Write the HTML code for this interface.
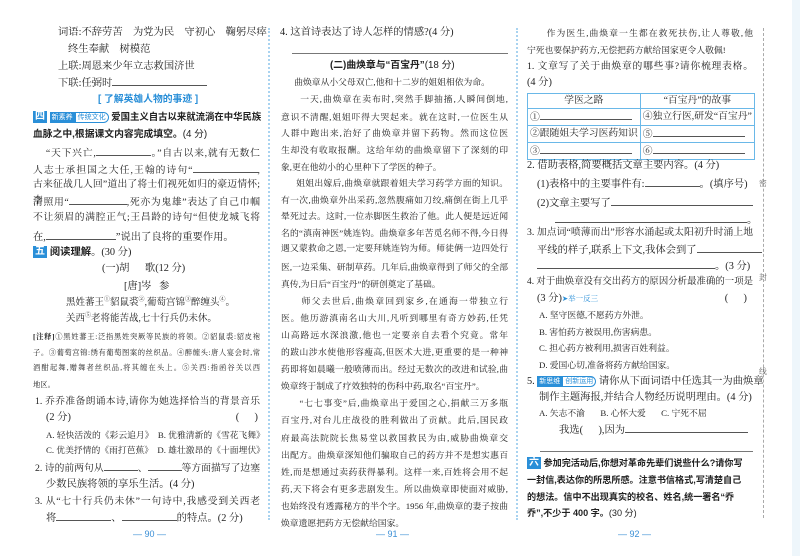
<!DOCTYPE html>
<html><head><meta charset="utf-8"><style>
body{margin:0;width:800px;height:556px;background:#fff;position:relative;overflow:hidden;font-family:"Liberation Serif","Noto Serif CJK SC","Noto Sans CJK SC",serif;color:#222;}
.l{position:absolute;white-space:nowrap;font-size:10.3px;line-height:16px;}
.j{text-align:justify;text-align-last:justify;white-space:normal;font-size:9.8px}
.s{font-size:8.8px}
.xs{font-size:7.8px}
.b{font-weight:bold;font-family:"Liberation Sans","Noto Sans CJK SC",sans-serif;}
.u{display:inline-block;border-bottom:1px solid #555;height:10px;vertical-align:baseline}
.tag{display:inline-block;background:#2a8fd8;color:#fff;font-size:7px;line-height:11px;padding:0 2px;font-family:"Liberation Sans","Noto Sans CJK SC",sans-serif;vertical-align:1px;font-weight:normal}
.tag2{display:inline-block;border:1px solid #2a8fd8;color:#2a8fd8;font-size:7px;line-height:9px;padding:0 2px;border-radius:0 6px 6px 0;font-family:"Liberation Sans","Noto Sans CJK SC",sans-serif;vertical-align:1px;font-weight:normal}
.num{display:inline-block;background:#2a8fd8;color:#fff;font-size:10px;line-height:12px;padding:0 2px;vertical-align:1px;font-family:"Liberation Sans","Noto Sans CJK SC",sans-serif;font-weight:bold}
.pn{position:absolute;color:#3b8fd6;font-size:9px;font-family:"Liberation Sans",sans-serif;top:529px}
.nt{position:absolute;left:33px;width:227px;font-size:7.3px;line-height:14px;text-align:justify;text-align-last:justify;white-space:nowrap}
table{position:absolute;border-collapse:collapse;font-size:9.8px;}
td{border:1.5px solid #6ab8e8;height:14px;padding:0 2px;line-height:14px;white-space:nowrap}
</style></head><body>
<div style="position:absolute;left:268px;top:28px;width:0;height:492px;border-left:2px dotted #a9d3f0"></div>
<div style="position:absolute;left:516px;top:28px;width:0;height:492px;border-left:2px dotted #a9d3f0"></div>
<div style="position:absolute;left:763px;top:28px;width:0;height:490px;border-left:1px dashed #aaa"></div>
<div class="l xs" style="left:759px;top:176px;color:#666">密</div>
<div class="l xs" style="left:759px;top:270px;color:#666">封</div>
<div class="l xs" style="left:759px;top:364px;color:#666">线</div>
<div style="position:absolute;left:792px;top:0;width:8px;height:556px;background:#eef6fb"></div>

<!-- LEFT -->
<div class="l" style="left:58px;top:25px">词语:不辞劳苦&nbsp;&nbsp;&nbsp;&nbsp;为党为民&nbsp;&nbsp;&nbsp;&nbsp;守初心&nbsp;&nbsp;&nbsp;&nbsp;鞠躬尽瘁</div>
<div class="l" style="left:68px;top:42px">终生奉献&nbsp;&nbsp;&nbsp;&nbsp;树模范</div>
<div class="l" style="left:58px;top:59px">上联:周恩来少年立志救国济世</div>
<div class="l" style="left:58px;top:75px">下联:任弼时<span class="u" style="width:95px"></span></div>
<div class="l b" style="left:98px;top:92px;color:#2a8fd8;font-size:9.8px">[ 了解英雄人物的事迹 ]</div>
<div class="l b" style="left:33px;top:109px;font-size:9.4px"><span class="num">四</span> <span class="tag">新素养</span><span class="tag2">传统文化</span> 爱国主义自古以来就流淌在中华民族</div>
<div class="l b" style="left:33px;top:127px;font-size:9.8px">血脉之中,根据课文内容完成填空。<span style="font-weight:normal">(4 分)</span></div>
<div class="l j" style="left:33px;top:145px;width:227px">&nbsp;&nbsp;&nbsp;&nbsp;“天下兴亡,<span class="u" style="width:55px"></span>。”自古以来,就有无数仁</div>
<div class="l j" style="left:33px;top:162px;width:227px">人志士承担国之大任,王翰的诗句“<span class="u" style="width:65px"></span>,</div>
<div class="l j" style="left:33px;top:177px;width:227px">古来征战几人回”道出了将士们视死如归的豪迈情怀;李</div>
<div class="l j" style="left:33px;top:194px;width:227px">清照用“<span class="u" style="width:58px"></span>,死亦为鬼雄”表达了自己巾帼</div>
<div class="l j" style="left:33px;top:210px;width:227px">不让须眉的满腔正气;王昌龄的诗句“但使龙城飞将</div>
<div class="l" style="left:33px;top:229px">在,<span class="u" style="width:70px"></span>”说出了良将的重要作用。</div>
<div class="l" style="left:33px;top:245px"><span class="num">五</span><span class="b"> 阅读理解</span>。(30 分)</div>
<div class="l" style="left:102px;top:261px">(一)胡&nbsp;&nbsp;&nbsp;&nbsp;&nbsp;&nbsp;歌(12 分)</div>
<div class="l" style="left:124px;top:279px">[唐]岑&nbsp;&nbsp;&nbsp;参</div>
<div class="l" style="left:66px;top:295px;font-size:9.5px">黑姓蕃王<sup style="font-size:6px;line-height:0">①</sup>貂鼠裘<sup style="font-size:6px;line-height:0">②</sup>,葡萄宫锦<sup style="font-size:6px;line-height:0">③</sup>醉缠头<sup style="font-size:6px;line-height:0">④</sup>。</div>
<div class="l" style="left:66px;top:311px;font-size:9.5px">关西<sup style="font-size:6px;line-height:0">⑤</sup>老将能苦战,七十行兵仍未休。</div>
<div class="nt" style="top:330px"><b>[注释]</b>①黑姓蕃王:泛指黑姓突厥等民族的将领。②貂鼠裘:貂皮袍</div>
<div class="nt" style="top:346px">子。③葡萄宫锦:绣有葡萄图案的丝织品。④醉缠头:唐人宴会时,常</div>
<div class="nt" style="top:361px">酒酣起舞,赠舞者丝织品,将其缠在头上。⑤关西:指函谷关以西</div>
<div class="l" style="left:33px;top:377px;font-size:7.3px">地区。</div>
<div class="l j" style="left:35px;top:394px;width:225px">1. 乔乔准备朗诵本诗,请你为她选择恰当的背景音乐</div>
<div class="l" style="left:46px;top:410px;width:214px">(2 分)<span style="position:absolute;right:2px">(&nbsp;&nbsp;&nbsp;&nbsp;&nbsp;&nbsp;)</span></div>
<div class="l s" style="left:46px;top:427px">A. 轻快活泼的《彩云追月》&nbsp;&nbsp;B. 优雅清新的《雪花飞舞》</div>
<div class="l s" style="left:46px;top:442px">C. 优美抒情的《雨打芭蕉》&nbsp;&nbsp;D. 雄壮激昂的《十面埋伏》</div>
<div class="l j" style="left:35px;top:460px;width:225px">2. 诗的前两句从<span class="u" style="width:34px"></span>、<span class="u" style="width:34px"></span>等方面描写了边塞</div>
<div class="l" style="left:46px;top:477px">少数民族将领的享乐生活。(4 分)</div>
<div class="l j" style="left:35px;top:494px;width:225px">3. 从“七十行兵仍未休”一句诗中,我感受到关西老</div>
<div class="l" style="left:46px;top:510px">将<span class="u" style="width:55px"></span>、<span class="u" style="width:55px"></span>的特点。(2 分)</div>
<div class="pn" style="left:133px">— 90 —</div>

<!-- MIDDLE -->
<div class="l" style="left:280px;top:25px">4. 这首诗表达了诗人怎样的情感?(4 分)</div>
<div style="position:absolute;left:292px;top:53px;width:216px;border-top:1px solid #777"></div>
<div class="l b" style="left:330px;top:58px;font-size:9.8px">(二)曲焕章与“百宝丹”<span style="font-weight:normal">(18 分)</span></div>
<div class="l s" style="left:281px;top:74px">&nbsp;&nbsp;&nbsp;&nbsp;&nbsp;&nbsp;曲焕章从小父母双亡,他和十二岁的姐姐相依为命。</div>
<div class="l s j" style="left:281px;top:91px;width:227px">&nbsp;&nbsp;&nbsp;&nbsp;&nbsp;&nbsp;一天,曲焕章在卖布时,突然手脚抽搐,人瞬间倒地,</div>
<div class="l s j" style="left:281px;top:109px;width:227px">意识不清醒,姐姐吓得大哭起来。就在这时,一位医生从</div>
<div class="l s j" style="left:281px;top:125px;width:227px">人群中跑出来,治好了曲焕章并留下药物。然而这位医</div>
<div class="l s j" style="left:281px;top:142px;width:227px">生却没有收取报酬。这给年幼的曲焕章留下了深刻的印</div>
<div class="l s" style="left:281px;top:159px">象,更在他幼小的心里种下了学医的种子。</div>
<div class="l s j" style="left:281px;top:175px;width:227px">&nbsp;&nbsp;&nbsp;&nbsp;&nbsp;&nbsp;姐姐出嫁后,曲焕章就跟着姐夫学习药学方面的知识。</div>
<div class="l s j" style="left:281px;top:192px;width:227px">有一次,曲焕章外出采药,忽然腹痛如刀绞,痛倒在街上几乎</div>
<div class="l s j" style="left:281px;top:208px;width:227px">晕死过去。这时,一位赤脚医生救治了他。此人便是远近闻</div>
<div class="l s j" style="left:281px;top:225px;width:227px">名的“滇南神医”姚连钧。曲焕章多年苦觅名师不得,今日得</div>
<div class="l s j" style="left:281px;top:240px;width:227px">遇又蒙救命之恩,一定要拜姚连钧为师。师徒俩一边四处行</div>
<div class="l s j" style="left:281px;top:259px;width:227px">医,一边采集、研制草药。几年后,曲焕章得到了师父的全部</div>
<div class="l s" style="left:281px;top:276px">真传,为日后“百宝丹”的研创奠定了基础。</div>
<div class="l s j" style="left:281px;top:293px;width:227px">&nbsp;&nbsp;&nbsp;&nbsp;&nbsp;&nbsp;师父去世后,曲焕章回到家乡,在通海一带独立行</div>
<div class="l s j" style="left:281px;top:310px;width:227px">医。他历游滇南名山大川,凡听到哪里有奇方妙药,任凭</div>
<div class="l s j" style="left:281px;top:327px;width:227px">山高路远水深浪激,他也一定要亲自去看个究竟。常年</div>
<div class="l s j" style="left:281px;top:344px;width:227px">的跋山涉水使他形容瘦高,但医术大进,更重要的是一种神</div>
<div class="l s j" style="left:281px;top:361px;width:227px">药即将如晨曦一般喷薄而出。经过无数次的改进和试验,曲</div>
<div class="l s" style="left:281px;top:378px">焕章终于制成了疗效独特的伤科中药,取名“百宝丹”。</div>
<div class="l s j" style="left:281px;top:395px;width:227px">&nbsp;&nbsp;&nbsp;&nbsp;&nbsp;&nbsp;“七七事变”后,曲焕章出于爱国之心,捐献三万多瓶</div>
<div class="l s j" style="left:281px;top:412px;width:227px">百宝丹,对台儿庄战役的胜利做出了贡献。此后,国民政</div>
<div class="l s j" style="left:281px;top:430px;width:227px">府最高法院院长焦易堂以救国救民为由,威胁曲焕章交</div>
<div class="l s j" style="left:281px;top:447px;width:227px">出配方。曲焕章深知他们骗取自己的药方并不是想实惠百</div>
<div class="l s j" style="left:281px;top:464px;width:227px">姓,而是想通过卖药获得暴利。这样一来,百姓将会用不起</div>
<div class="l s j" style="left:281px;top:481px;width:227px">药,天下将会有更多悲剧发生。所以曲焕章即使面对威胁,</div>
<div class="l s j" style="left:281px;top:498px;width:227px">也始终没有透露秘方的半个字。1956 年,曲焕章的妻子按曲</div>
<div class="l s" style="left:281px;top:515px">焕章遗愿把药方无偿献给国家。</div>
<div class="pn" style="left:376px">— 91 —</div>

<!-- RIGHT -->
<div class="l s j" style="left:527px;top:25px;width:226px">&nbsp;&nbsp;&nbsp;&nbsp;&nbsp;&nbsp;作为医生,曲焕章一生都在救死扶伤,让人尊敬,他</div>
<div class="l s" style="left:527px;top:42px">宁死也要保护药方,无偿把药方献给国家更令人敬佩!</div>
<div class="l j" style="left:527px;top:59px;width:226px">1. 文章写了关于曲焕章的哪些事?请你梳理表格。</div>
<div class="l" style="left:527px;top:75px">(4 分)</div>
<table style="left:527px;top:93px;width:226px">
<tr><td style="text-align:center;width:108px">学医之路</td><td style="text-align:center">“百宝丹”的故事</td></tr>
<tr><td>①<span class="u" style="width:92px"></span></td><td>④独立行医,研发“百宝丹”</td></tr>
<tr><td>②跟随姐夫学习医药知识</td><td>⑤<span class="u" style="width:92px"></span></td></tr>
<tr><td>③<span class="u" style="width:92px"></span></td><td>⑥<span class="u" style="width:92px"></span></td></tr>
</table>
<div class="l" style="left:527px;top:158px">2. 借助表格,简要概括文章主要内容。(4 分)</div>
<div class="l" style="left:537px;top:176px">(1)表格中的主要事件有:<span class="u" style="width:55px"></span>。(填序号)</div>
<div class="l" style="left:537px;top:195px">(2)文章主要写了<span class="u" style="width:142px"></span></div>
<div class="l" style="left:555px;top:212px"><span class="u" style="width:192px"></span>。</div>
<div class="l j" style="left:527px;top:225px;width:226px">3. 加点词“喷薄而出”形容水涌起或太阳初升时涌上地</div>
<div class="l" style="left:537px;top:242px">平线的样子,联系上下文,我体会到了<span class="u" style="width:65px"></span></div>
<div class="l" style="left:537px;top:258px"><span class="u" style="width:178px"></span>。(3 分)</div>
<div class="l j" style="left:527px;top:274px;width:226px;font-size:9.4px">4. 对于曲焕章没有交出药方的原因分析最准确的一项是</div>
<div class="l" style="left:537px;top:291px;width:216px">(3 分)<span style="color:#2a8fd8;font-size:7.5px">➤举一反三</span><span style="position:absolute;right:6px">(&nbsp;&nbsp;&nbsp;&nbsp;&nbsp;&nbsp;)</span></div>
<div class="l s" style="left:539px;top:307px">A. 坚守医德,不愿药方外泄。</div>
<div class="l s" style="left:539px;top:324px">B. 害怕药方被误用,伤害病患。</div>
<div class="l s" style="left:539px;top:340px">C. 担心药方被利用,损害百姓利益。</div>
<div class="l s" style="left:539px;top:357px">D. 爱国心切,准备将药方献给国家。</div>
<div class="l" style="left:527px;top:374px">5. <span class="tag">新思维</span><span class="tag2">创新运用</span> 请你从下面词语中任选其一为曲焕章</div>
<div class="l" style="left:539px;top:390px">制作主题海报,并结合人物经历说明理由。(4 分)</div>
<div class="l s" style="left:539px;top:405px">A. 矢志不渝&nbsp;&nbsp;&nbsp;&nbsp;&nbsp;&nbsp;&nbsp;B. 心怀大爱&nbsp;&nbsp;&nbsp;&nbsp;&nbsp;&nbsp;&nbsp;C. 宁死不屈</div>
<div class="l" style="left:559px;top:422px">我选(&nbsp;&nbsp;&nbsp;&nbsp;&nbsp;&nbsp;),因为<span class="u" style="width:123px"></span></div>
<div style="position:absolute;left:540px;top:451px;width:213px;border-top:1px solid #777"></div>
<div class="l b" style="left:527px;top:455px;font-size:9.1px"><span class="num">六</span> 参加完活动后,你想对革命先辈们说些什么?请你写</div>
<div class="l b" style="left:527px;top:472px;font-size:9.1px">一封信,表达你的所思所感。注意书信格式,写清楚自己</div>
<div class="l b" style="left:527px;top:489px;font-size:9.1px">的想法。信中不出现真实的校名、姓名,统一署名“乔</div>
<div class="l b" style="left:527px;top:505px;font-size:9.1px">乔”,不少于 400 字。<span style="font-weight:normal">(30 分)</span></div>
<div class="pn" style="left:618px">— 92 —</div>
</body></html>
